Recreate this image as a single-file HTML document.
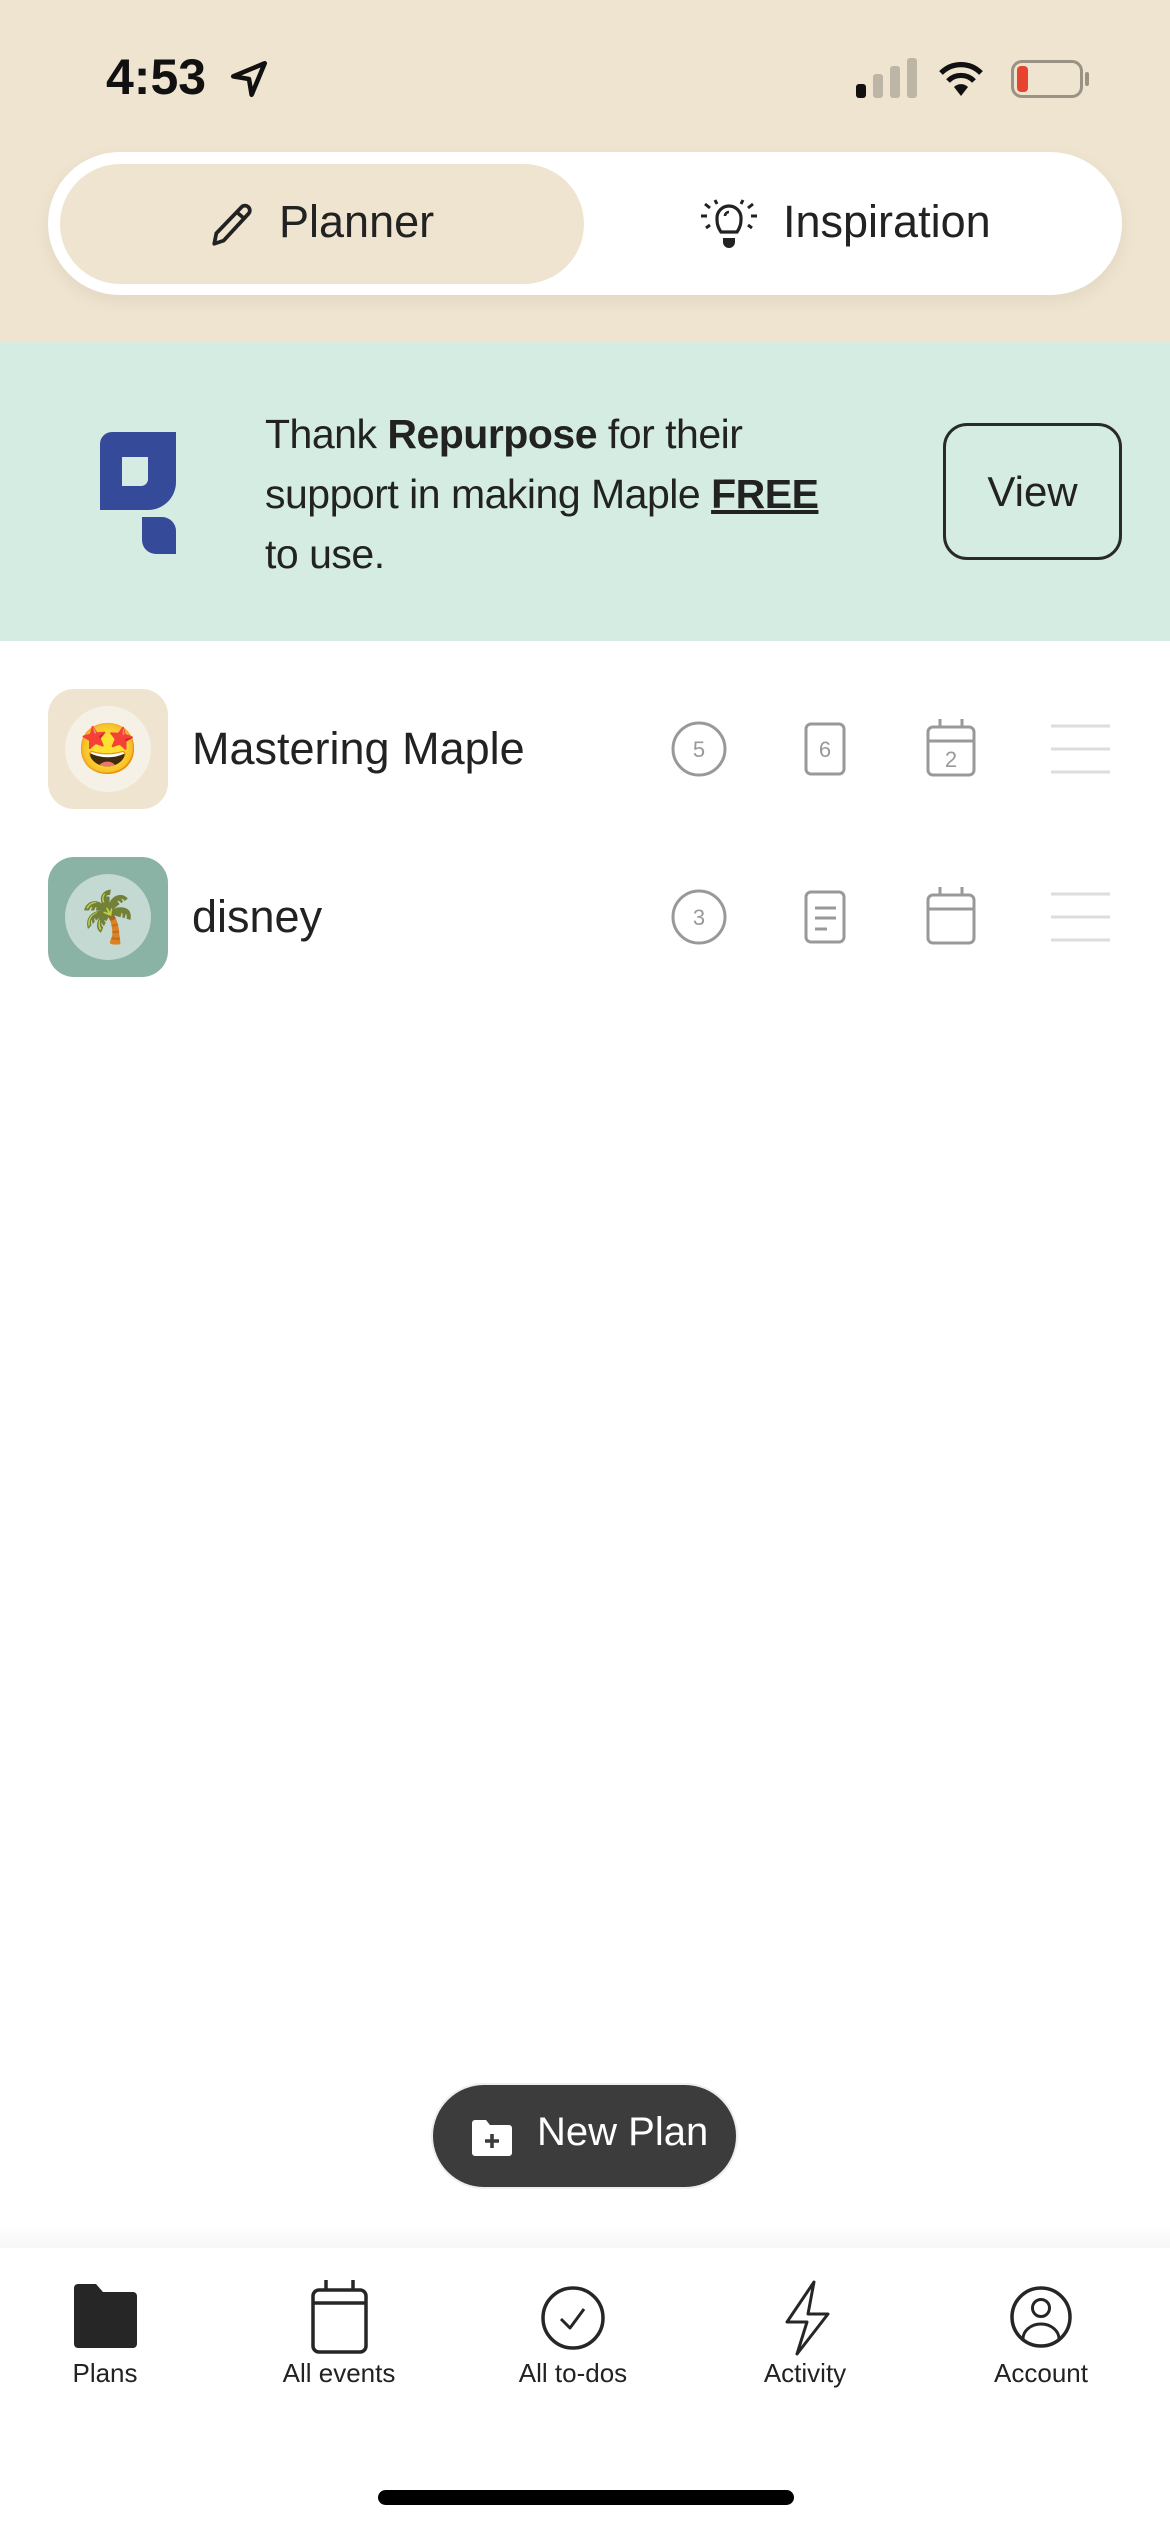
<!DOCTYPE html>
<html><head><meta charset="utf-8"><style>
*{margin:0;padding:0;box-sizing:border-box}
body{width:1170px;height:2532px;position:relative;background:#fff;font-family:"Liberation Sans",sans-serif;color:#222;overflow:hidden}
.abs{position:absolute}
</style></head><body>
<div class="abs" style="left:0;top:0;width:1170px;height:342px;background:#EFE4CF"></div>
<div class="abs" style="left:106px;top:48px;font-size:50px;font-weight:bold;color:#111">4:53</div>
<svg class="abs" style="left:228px;top:58px" width="42" height="42" viewBox="0 0 24 24"><path d="M21 3 L3 10.5 L12 12 L13.5 21 Z" fill="none" stroke="#111" stroke-width="2.6" stroke-linejoin="round"/></svg>
<div class="abs" style="left:856px;top:84px;width:10px;height:14px;background:#111;border-radius:3px"></div>
<div class="abs" style="left:873px;top:74px;width:10px;height:24px;background:#bdb5a5;border-radius:3px"></div>
<div class="abs" style="left:890px;top:66px;width:10px;height:32px;background:#bdb5a5;border-radius:3px"></div>
<div class="abs" style="left:907px;top:58px;width:10px;height:40px;background:#bdb5a5;border-radius:3px"></div>
<svg class="abs" style="left:937px;top:58px" width="48" height="40" viewBox="0 0 24 20"><path d="M12 19 L8.5 14.5 A5 5 0 0 1 15.5 14.5 Z" fill="#111"/><path d="M5.5 11.5 A9 9 0 0 1 18.5 11.5" stroke="#111" stroke-width="2.6" fill="none"/><path d="M2 7.5 A14 14 0 0 1 22 7.5" stroke="#111" stroke-width="2.6" fill="none"/></svg>
<div class="abs" style="left:1011px;top:60px;width:72px;height:38px;border:3px solid #9a9284;border-radius:11px"></div>
<div class="abs" style="left:1017px;top:66px;width:11px;height:26px;background:#e8432f;border-radius:4px"></div>
<div class="abs" style="left:1085px;top:72px;width:4px;height:14px;background:#9a9284;border-radius:2px"></div>

<div class="abs" style="left:48px;top:152px;width:1074px;height:143px;background:#fff;border-radius:72px;box-shadow:0 6px 18px rgba(0,0,0,0.06)"></div>
<div class="abs" style="left:60px;top:164px;width:524px;height:120px;background:#EFE4CF;border-radius:60px"></div>
<svg class="abs" style="left:208px;top:200px" width="50" height="50" viewBox="0 0 24 24"><path d="M3 21 L4 16 L16 3.5 A1.8 1.8 0 0 1 19.5 6.5 L7.5 19.5 Z M14 6 L17.5 9" fill="none" stroke="#222" stroke-width="1.8" stroke-linejoin="round"/></svg>
<div class="abs" style="left:279px;top:196px;font-size:45px;color:#222">Planner</div>
<svg class="abs" style="left:697px;top:198px" width="64" height="54" viewBox="0 0 32 27"><path d="M12 17 C10 14 10 12 10 10 A6 6 0 0 1 22 10 C22 12 22 14 20 17 Z" fill="none" stroke="#222" stroke-width="1.6"/><path d="M13 20 H19 V22 A3 3 0 0 1 13 22 Z" fill="#222"/><path d="M14 9 A2 2 0 0 1 16 7" stroke="#222" stroke-width="1.3" fill="none"/><path d="M2 9 H5 M27 9 H30 M4 3 L6.5 5 M28 3 L25.5 5 M4.5 15 L6.5 13.5 M27.5 15 L25.5 13.5 M9 1 L10 3 M23 1 L22 3" stroke="#222" stroke-width="1.5"/></svg>
<div class="abs" style="left:783px;top:196px;font-size:45px;color:#222">Inspiration</div>

<div class="abs" style="left:0;top:342px;width:1170px;height:299px;background:#D4ECE1"></div>
<svg class="abs" style="left:100px;top:432px" width="76" height="122" viewBox="0 0 76 122"><path d="M0 12 A12 12 0 0 1 12 0 H76 V50 A28 28 0 0 1 48 78 H0 Z M22 25 V54 H41 A7 7 0 0 0 48 47 V25 Z" fill="#364a9a" fill-rule="evenodd"/><path d="M42 85 H62 A14 14 0 0 1 76 99 V122 H56 A14 14 0 0 1 42 108 Z" fill="#364a9a"/></svg>
<div class="abs" style="left:265px;top:404px;font-size:41px;line-height:60px;color:#222;white-space:nowrap;letter-spacing:-0.5px">Thank <b>Repurpose</b> for their<br>support in making Maple <b style="text-decoration:underline;text-decoration-thickness:4px">FREE</b><br>to use.</div>
<div class="abs" style="left:943px;top:423px;width:179px;height:137px;border:3px solid #2a2a2a;border-radius:24px;font-size:42px;line-height:131px;text-align:center;color:#222">View</div>

<div class="abs" style="left:48px;top:689px;width:120px;height:120px;background:#EFE4CF;border-radius:26px"></div>
<div class="abs" style="left:65px;top:706px;width:86px;height:86px;background:#f6f1e7;border-radius:50%;font-size:50px;line-height:86px;text-align:center">🤩</div>
<div class="abs" style="left:192px;top:723px;font-size:45px;color:#222">Mastering Maple</div>
<div class="abs" style="left:48px;top:857px;width:120px;height:120px;background:#8AB3A6;border-radius:26px"></div>
<div class="abs" style="left:65px;top:874px;width:86px;height:86px;background:#c3d9d2;border-radius:50%;font-size:50px;line-height:86px;text-align:center">🌴</div>
<div class="abs" style="left:192px;top:891px;font-size:45px;color:#222">disney</div>

<svg class="abs" style="left:0;top:689px" width="1170" height="300">
<g fill="none" stroke="#999" stroke-width="3">
<circle cx="699" cy="60" r="26"/>
<rect x="806" y="35" width="38" height="50" rx="5"/>
<rect x="928" y="38" width="46" height="48" rx="5"/><path d="M928 52 H974 M940 38 V30 M962 38 V30"/>
<path d="M1051 37 H1110 M1051 60 H1110 M1051 83 H1110" stroke="#ddd"/>
<circle cx="699" cy="228" r="26"/>
<rect x="806" y="203" width="38" height="50" rx="5"/><path d="M815 219 H836 M815 229 H836 M815 240 H827"/>
<rect x="928" y="206" width="46" height="48" rx="5"/><path d="M928 220 H974 M940 206 V198 M962 206 V198"/>
<path d="M1051 205 H1110 M1051 228 H1110 M1051 251 H1110" stroke="#ddd"/>
</g>
<g fill="#999" font-family="Liberation Sans" font-size="22" text-anchor="middle">
<text x="699" y="68">5</text><text x="825" y="68">6</text><text x="951" y="78">2</text><text x="699" y="236">3</text>
</g></svg>

<div class="abs" style="left:433px;top:2085px;width:303px;height:102px;background:#3c3c3c;border-radius:51px;box-shadow:0 0 0 2px #eee"></div>
<svg class="abs" style="left:470px;top:2119px" width="44" height="38" viewBox="0 0 22 19"><path d="M1 2 A1.5 1.5 0 0 1 2.5 0.5 H8 L10 3 H19.5 A1.5 1.5 0 0 1 21 4.5 V17 A1.5 1.5 0 0 1 19.5 18.5 H2.5 A1.5 1.5 0 0 1 1 17 Z" fill="#fff"/><path d="M11 7.5 V14.5 M7.5 11 H14.5" stroke="#3c3c3c" stroke-width="1.8"/></svg>
<div class="abs" style="left:537px;top:2110px;font-size:40px;color:#fff">New Plan</div>

<div class="abs" style="left:0;top:2226px;width:1170px;height:22px;background:linear-gradient(#fff,#f6f6f6)"></div>
<div class="abs" style="left:0;top:2248px;width:1170px;height:284px;background:#fff"></div>
<svg class="abs" style="left:0;top:2270px" width="1170" height="90">
<path d="M74 18 A4 4 0 0 1 78 14 H96 L103 22 H133 A4 4 0 0 1 137 26 V74 A4 4 0 0 1 133 78 H78 A4 4 0 0 1 74 74 Z" fill="#262626"/>
<g fill="none" stroke="#262626" stroke-width="3.5" stroke-linejoin="round">
<rect x="313" y="20" width="53" height="62" rx="6"/><path d="M313 33 H366 M326 20 V10 M353 20 V10"/>
<circle cx="573" cy="48" r="30"/><path d="M561 49 L570 58 L584 39" stroke-width="3"/>
<path d="M814 12 L787 52 H807 L797 84 L828 44 H808 Z" stroke-width="3"/>
<circle cx="1041" cy="47" r="29"/><circle cx="1041" cy="38" r="8.5" stroke-width="3"/><path d="M1023 69 A18 15 0 0 1 1059 69" stroke-width="3"/>
</g></svg>
<div class="abs" style="left:0;top:2358px;width:1170px;font-size:26px;color:#222">
<span class="abs" style="left:105px;transform:translateX(-50%)">Plans</span>
<span class="abs" style="left:339px;transform:translateX(-50%);white-space:nowrap">All events</span>
<span class="abs" style="left:573px;transform:translateX(-50%);white-space:nowrap">All to-dos</span>
<span class="abs" style="left:805px;transform:translateX(-50%)">Activity</span>
<span class="abs" style="left:1041px;transform:translateX(-50%)">Account</span>
</div>
<div class="abs" style="left:378px;top:2490px;width:416px;height:15px;background:#000;border-radius:8px"></div>
</body></html>
